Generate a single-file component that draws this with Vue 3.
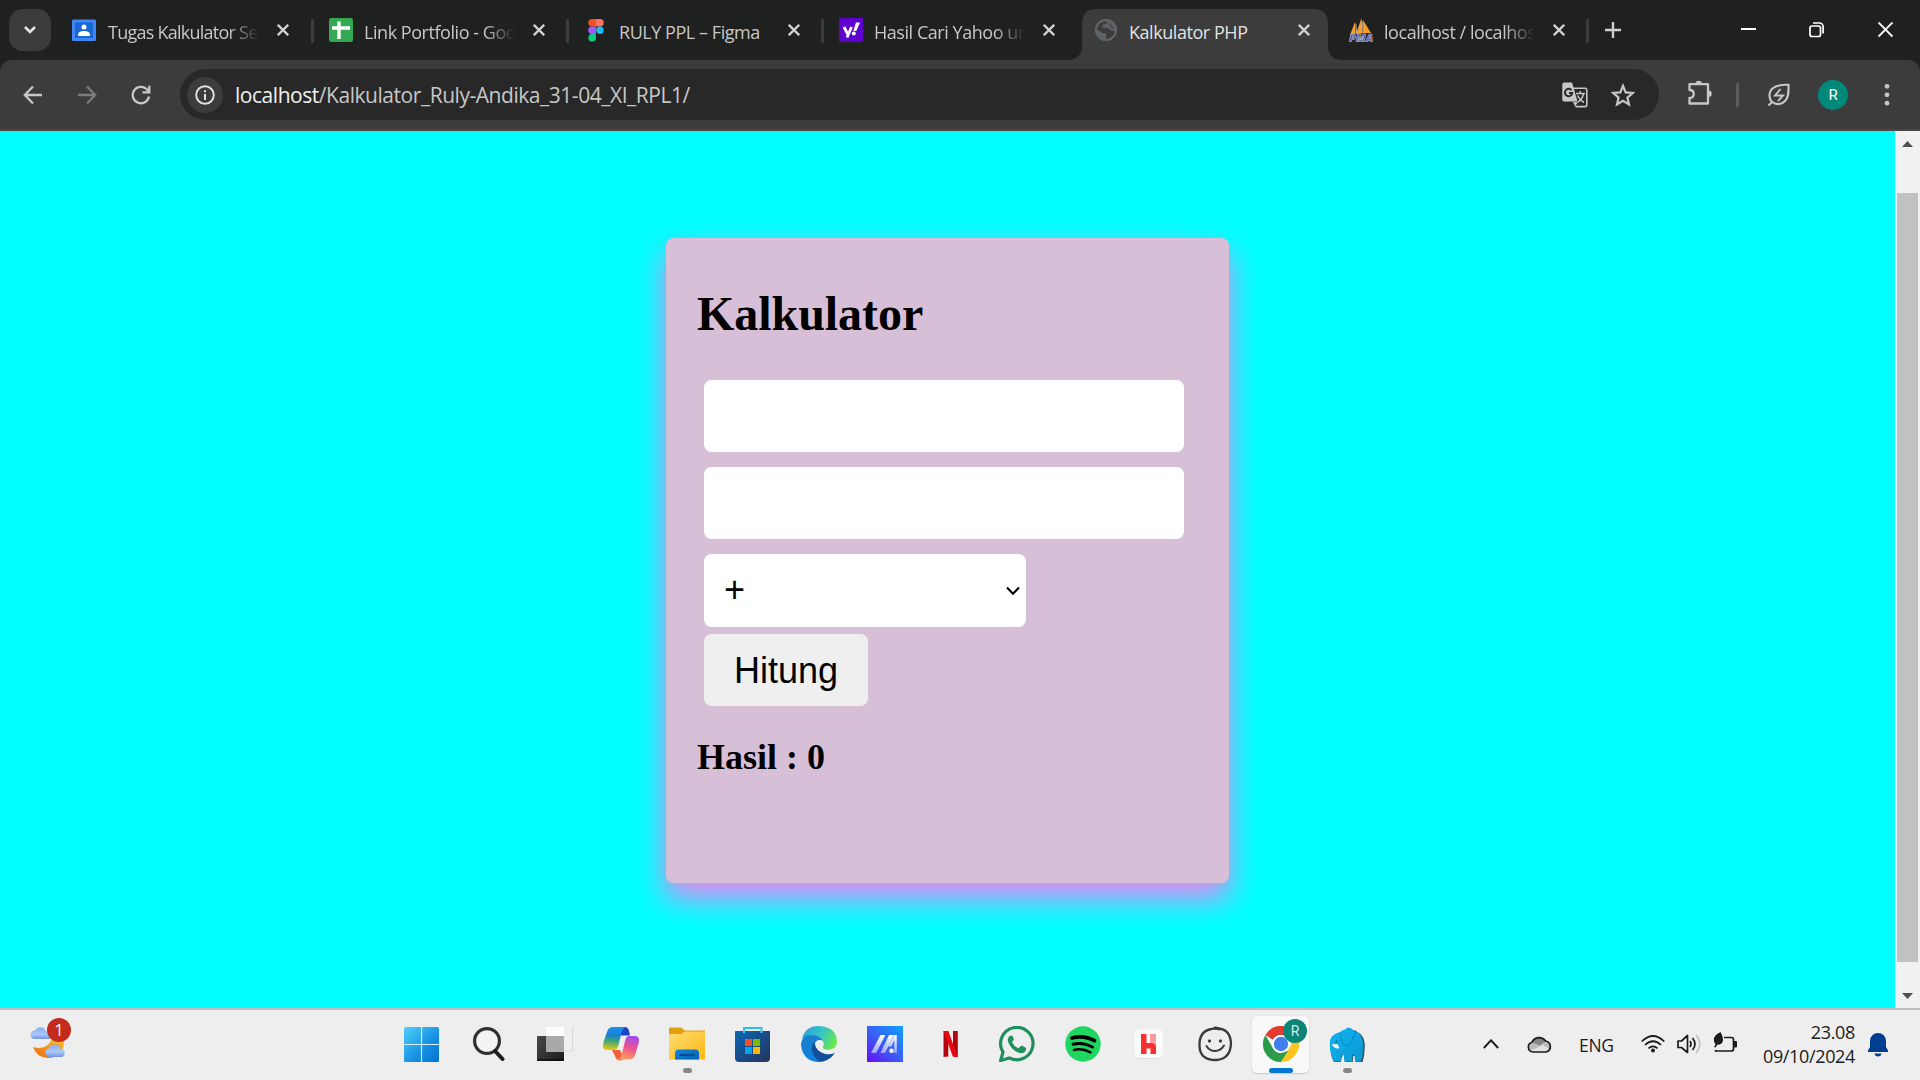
<script setup>
const tabs = [
  { icon: 'classroom', title: 'Tugas Kalkulator Se', fade: true },
  { icon: 'sheets', title: 'Link Portfolio - Goo', fade: true },
  { icon: 'figma', title: 'RULY PPL – Figma' },
  { icon: 'yahoo', title: 'Hasil Cari Yahoo un', fade: true },
  { icon: 'globe', title: 'Kalkulator PHP', active: true },
  { icon: 'pma', title: 'localhost / localhos', fade: true }
]
</script>

<template>
  <div class="screen">
    <header class="tabstrip">
      <div class="tab-search">
        <svg width="14" height="10" viewBox="0 0 14 10"><path d="M2 2l5 5 5-5" fill="none" stroke="#e6e6e6" stroke-width="2.6" /></svg>
      </div>
      <div v-for="t in tabs" :key="t.icon" class="tab" :class="[t.icon, { active: t.active }]">
        <svg v-if="t.active" class="shape" width="276" height="51" viewBox="0 0 276 51">
          <path d="M0 51Q15 51 15 36V15Q15 0 30 0H246Q261 0 261 15V36Q261 51 276 51Z" fill="#3c3c3c" />
        </svg>
        <svg class="fav" width="24" height="24" viewBox="0 0 24 24">
          <g v-if="t.icon === 'classroom'">
            <rect y="1.500" width="24" height="21.500" rx="1.500" fill="#4285f4" />
            <rect x="3" y="4.500" width="18" height="15.500" fill="#1967d2" />
            <circle cx="12" cy="9" r="2.500" fill="#fff" />
            <path d="M6 18v-1.500q0-3.500 6-3.500t6 3.500V18Z" fill="#fff" />
          </g>
          <g v-else-if="t.icon === 'sheets'">
            <rect width="24" height="24" rx="2.500" fill="#34a853" />
            <path d="M10 3.500V21M3 10h18" stroke="#fff" stroke-width="3.400" />
          </g>
          <g v-else-if="t.icon === 'figma'">
            <path d="M12 1H8a3.700 3.700 0 0 0 0 7.500h4Z" fill="#f24e1e" />
            <path d="M12 1h4a3.700 3.700 0 0 1 0 7.500h-4Z" fill="#ff7262" />
            <path d="M12 8.500H8a3.700 3.700 0 0 0 0 7.500h4Z" fill="#a259ff" />
            <circle cx="16" cy="12.300" r="3.700" fill="#1abcfe" />
            <path d="M12 16H8a3.800 3.800 0 1 0 4 3.800Z" fill="#0acf83" />
          </g>
          <g v-else-if="t.icon === 'yahoo'">
            <rect width="24" height="24" fill="#5f01d1" />
            <path d="M5 9l3.700 7M12.500 9L8 19.500" stroke="#fff" stroke-width="2.800" fill="none" />
            <path d="M17 4.500h4l-3.700 8.500h-3Z" fill="#fff" /><circle cx="14.800" cy="15.400" r="2" fill="#fff" />
          </g>
          <g v-else-if="t.icon === 'globe'">
            <circle cx="12" cy="12" r="11" fill="#5f6368" />
            <path d="M3 9l1.500-3.500L9 3l4 .3-1 2.700-3 .7-.5 3 5.500.3 2.500 2.500 4.500.5-1 4.500-4.500 4h-4l1-3.500-1-2.500-4-.7L3 11.500Z" fill="#3c3c3c" />
            <path d="M14 4l5 3.500 1.500 4-3-.5-2.500-3Z" fill="#3c3c3c" opacity="0.400" />
            <circle cx="12" cy="12" r="10" fill="none" stroke="#5f6368" stroke-width="2" />
          </g>
          <g v-else>
            <path d="M1 17L6 4l.8 11.500ZM7 16L12.500 0l1.200 15.500ZM14.500 15L14 2l8 13Z" fill="#f89c2a" />
            <path d="M6.800 5.500l1 10M13 3l1.500 12" stroke="#c9c9c9" stroke-width="0.800" />
            <text x="0" y="24" font-size="10" font-weight="900" font-style="italic" fill="#5557a8" stroke="#c8c8d8" stroke-width="0.500" textLength="24" lengthAdjust="spacingAndGlyphs">PMA</text>
          </g>
        </svg>
        <span class="title" :class="{ fade: t.fade }">{{ t.title }}</span>
        <svg class="x" width="12" height="12" viewBox="0 0 12 12"><path d="M.8.8l10.400 10.400M11.200.8L.8 11.200" /></svg>
      </div>
      <svg class="plus" width="16" height="16" viewBox="0 0 16 16"><path d="M8 0v16M0 8h16" stroke="#cfcfcf" stroke-width="2.400" /></svg>
      <div class="winbtns">
        <svg width="15" height="16" viewBox="0 0 15 16"><path d="M0 7h15" stroke="#fff" stroke-width="2" /></svg>
        <svg width="15" height="16" viewBox="0 0 15 16" fill="none" stroke="#fff" stroke-width="1.700"><rect x="1" y="4" width="10.500" height="10.500" rx="2" /><path d="M4 1h6.500a3.500 3.500 0 0 1 3.600 3.500V11.500" /></svg>
        <svg class="close" width="15" height="16" viewBox="0 0 15 16"><path d="M.5.5l14 14M14.500.5l-14 14" stroke="#fff" stroke-width="1.900" /></svg>
      </div>
    </header>

    <div class="toolbar-back">
      <nav class="toolbar">
        <svg class="back" width="20" height="20" viewBox="0 0 20 20"><path d="M19 10H2M10 1.500L1.800 10l8.200 8.500" /></svg>
        <svg class="fwd" width="20" height="20" viewBox="0 0 20 20"><path d="M1 10h17M10 1.500l8.200 8.500-8.200 8.500" /></svg>
        <svg class="reload" width="20" height="20" viewBox="0 0 20 20"><path d="M18 11.500A8.200 8.200 0 1 1 15.500 4L18 6.800M18.300.8V7.400H11.500" /></svg>
        <div class="omnibox">
          <span class="info">
            <svg width="20" height="20" viewBox="0 0 20 20"><circle cx="10" cy="10" r="8.800" fill="none" stroke="#e3e3e3" stroke-width="1.900" /><path d="M10 9v6M10 5.300v2" stroke="#e3e3e3" stroke-width="2" /></svg>
          </span>
          <span class="url"><b>localhost</b>/Kalkulator_Ruly-Andika_31-04_XI_RPL1/</span>
          <svg class="translate" width="26" height="26" viewBox="0 0 26 26">
            <path d="M11 6.200h12a1.800 1.800 0 0 1 1.800 1.800v14.800a1.800 1.800 0 0 1-1.800 1.800H13.500" fill="none" stroke="#c7c7c7" stroke-width="1.600" />
            <path d="M2 .5h8l5.500 19H2A1.800 1.800 0 0 1 .3 17.700V2.300A1.800 1.800 0 0 1 2 .5ZM11 20h5l-2.800 4.500Z" fill="#c7c7c7" />
            <path d="M9.600 8.300A3.700 3.700 0 1 0 10.300 11H7" fill="none" stroke="#282828" stroke-width="1.900" />
            <path d="M14 11.500h9M18.300 9v2.500M21.500 12c-1 4-3 6.500-5.500 8M15.500 13.500q2 4.500 6.500 7" fill="none" stroke="#c7c7c7" stroke-width="1.500" />
          </svg>
          <svg class="star" width="24" height="24" viewBox="0 0 24 24"><path d="M12 2.800l2.700 6.600 7 .6-5.300 4.600 1.600 6.900-6-3.700-6 3.700 1.600-6.900L2.300 10l7-.6Z" fill="none" stroke="#c7c7c7" stroke-width="2.200" /></svg>
        </div>
        <svg class="puzzle" width="25" height="26" viewBox="0 0 25 26">
          <path d="M1.500 4.200h18.500v19.300h-18.500v-5.500q4.200 0 4.200-4t-4.200-4Z" fill="none" stroke="#c7c7c7" stroke-width="2.300" stroke-linejoin="round" />
          <path d="M7.500 4a3.200 3.200 0 0 1 6.400 0ZM20.500 10.500a3.200 3.200 0 0 1 0 6.400Z" fill="#c7c7c7" />
        </svg>
        <i class="bar"></i>
        <svg class="leaf" width="24" height="24" viewBox="0 0 24 24" fill="none" stroke="#c7c7c7" stroke-width="2.100">
          <path d="M1.500 22.500L4.500 19.500M5.500 19.500C1 15 2 8.500 5.500 5.500S14 1.500 21.500 1.800C21.700 10 21.500 14 18.500 17.500S10 23 4.800 18.800" />
          <path d="M13.500 6L8 12.500h8L11 18" stroke-width="1.900" />
        </svg>
        <span class="avatar">R</span>
        <svg class="dots" width="6" height="24" viewBox="0 0 6 24" fill="#c7c7c7"><circle cx="3" cy="3.300" r="2.400" /><circle cx="3" cy="11.800" r="2.400" /><circle cx="3" cy="20.200" r="2.400" /></svg>
      </nav>
    </div>

    <main class="viewport">
      <section class="page">
        <div class="card">
          <h1>Kalkulator</h1>
          <input class="field" type="text" />
          <input class="field" type="text" />
          <div class="select">
            <span>+</span>
            <svg width="14" height="10" viewBox="0 0 14 10"><path d="M1 1.500l6 6.300 6-6.300" fill="none" stroke="#000" stroke-width="2.100" /></svg>
          </div>
          <button class="btn">Hitung</button>
          <h2>Hasil : 0</h2>
        </div>
      </section>
      <aside class="scroll">
        <svg width="11" height="6" viewBox="0 0 11 6"><path d="M5.500 0L11 6H0Z" fill="#505050" /></svg>
        <i class="thumb"></i>
        <svg width="11" height="6" viewBox="0 0 11 6"><path d="M5.500 6L11 0H0Z" fill="#505050" /></svg>
      </aside>
    </main>

    <footer class="taskbar">
      <div class="weather">
        <svg width="38" height="36" viewBox="0 0 38 36">
          <defs>
            <linearGradient id="moon" x1="1" y1="0" x2="0.300" y2="1"><stop offset="0" stop-color="#f5c336" /><stop offset="1" stop-color="#ee7414" /></linearGradient>
            <linearGradient id="cl" x1="0" y1="0" x2="0" y2="1"><stop offset="0" stop-color="#87aef2" /><stop offset="0.600" stop-color="#a9c8fa" /><stop offset="1" stop-color="#7196e0" /></linearGradient>
          </defs>
          <path d="M3 23Q18 27 22 14L34 14Q35 34 18 34Q6 33 3 23Z" fill="url(#moon)" />
          <path d="M4 15a4.300 4.300 0 0 1 1-8.500 6 6 0 0 1 11 .5Q20 8 20 15Z" fill="url(#cl)" />
          <path d="M19 33a4.300 4.300 0 0 1 0-8.500 6 6 0 0 1 11.500 .5 4 4 0 0 1 .5 8Z" fill="url(#cl)" />
        </svg>
        <span class="badge">1</span>
      </div>

      <div class="apps">
        <div class="app">
          <svg width="36" height="36" viewBox="0 0 36 36">
            <defs><linearGradient id="win" x1="0" y1="0" x2="1" y2="1"><stop offset="0" stop-color="#4fd0fb" /><stop offset="0.600" stop-color="#1590e2" /><stop offset="1" stop-color="#0273d0" /></linearGradient></defs>
            <rect x="1" y="1" width="35" height="35" rx="1.500" fill="url(#win)" /><path d="M18.500 1v35M1 18.500h35" stroke="#d9effb" stroke-width="1.200" />
          </svg>
        </div>
        <div class="app">
          <svg width="36" height="36" viewBox="0 0 36 36"><circle cx="18" cy="15" r="12.400" fill="#f3f3f3" stroke="#2f2f2f" stroke-width="3.200" /><path d="M26 25l7.500 8" stroke="#1d1d1d" stroke-width="4" stroke-linecap="round" /></svg>
        </div>
        <div class="app">
          <svg width="36" height="36" viewBox="0 0 36 36">
            <defs><linearGradient id="tvd" x1="0" y1="0" x2="1" y2="1"><stop offset="0" stop-color="#4a4a4a" /><stop offset="1" stop-color="#1c1c1c" /></linearGradient></defs>
            <rect y="10" width="27" height="25" rx="1" fill="url(#tvd)" /><path d="M0 34h27" stroke="#000" />
            <rect x="9" y="1" width="27" height="24.500" rx="1" fill="#fdfdfd" /><path d="M27 1h9v24.500h-9Z" fill="#efefef" /><path d="M9 25h27M35.500 1v24" stroke="#d0d0d0" stroke-width="0.800" />
            <rect x="9" y="10" width="18" height="15.500" fill="#a9a9a9" />
          </svg>
        </div>
        <div class="app">
          <svg width="36" height="36" viewBox="0 0 36 36">
            <defs>
              <linearGradient id="cpa" x1="0.300" y1="0" x2="0.200" y2="1"><stop offset="0" stop-color="#1693ee" /><stop offset="0.350" stop-color="#1b7fd4" /><stop offset="0.600" stop-color="#3da872" /><stop offset="1" stop-color="#f2cb0c" /></linearGradient>
              <linearGradient id="cpb" x1="0.600" y1="0" x2="0.300" y2="1"><stop offset="0" stop-color="#a44bea" /><stop offset="0.500" stop-color="#ee558c" /><stop offset="1" stop-color="#ffa45e" /></linearGradient>
            </defs>
            <path d="M9 24h8l4 9q-2 2-5 1.300-3-.3-4-4.300Z" fill="#f4603a" />
            <path d="M17 1h5q3 0 4 4l1 4.500h-9Z" fill="#1844c8" />
            <path d="M10 1h13q-3 .5-4.500 6l-3 12q-1 5-5 5H4Q-1.500 24 .5 16L4 6Q5.500 1 10 1Z" fill="url(#cpa)" />
            <path d="M26 10h6q5.500 0 3.500 8L32 29q-1.500 4.500-6 4.500H14q3.500-.5 5-6l3-12.500q1-5 4-5Z" fill="url(#cpb)" />
          </svg>
        </div>
        <div class="app">
          <svg width="36" height="36" viewBox="0 0 36 36">
            <defs><linearGradient id="fold" x1="0" y1="0" x2="1" y2="1"><stop offset="0" stop-color="#ffdc72" /><stop offset="1" stop-color="#fcb913" /></linearGradient><linearGradient id="foldb" x1="0" y1="0" x2="1" y2="1"><stop offset="0" stop-color="#1186dc" /><stop offset="1" stop-color="#0460b5" /></linearGradient></defs>
            <path d="M0 3q0-1.500 1.500-1.500h10.500L16 4.500H36V10H0Z" fill="#dfa008" /><path d="M0 9q0-1 1-1h11l4-2.500H36V33.500H0Z" fill="url(#fold)" />
            <path d="M6 33.500V27q0-3.500 3.500-3.500h17Q30 23.500 30 27v6.500Z" fill="url(#foldb)" /><path d="M11 29h14" stroke="#07498b" stroke-width="1.800" stroke-linecap="round" />
          </svg>
          <i class="dot"></i>
        </div>
        <div class="app">
          <svg width="36" height="36" viewBox="0 0 36 36">
            <defs><linearGradient id="store" x1="0" y1="0" x2="1" y2="1"><stop offset="0" stop-color="#0a67b6" /><stop offset="1" stop-color="#26325a" /></linearGradient></defs>
            <path d="M9 7V2h17.500v5" fill="none" stroke="#2cbdf0" stroke-width="2" /><path d="M0 5.500q0-.5.500-.5h34q.5 0 .5.500V32q0 4-4 4H4q-4 0-4-4Z" fill="url(#store)" />
            <path d="M9 5v2M26.500 5v2" stroke="#3fd3fa" stroke-width="2" />
            <rect x="10" y="13" width="7" height="7" fill="#f25022" /><rect x="18" y="13" width="7" height="7" fill="#7fba00" /><rect x="10" y="21" width="7" height="7" fill="#00a4ef" /><rect x="18" y="21" width="7" height="7" fill="#ffb900" />
          </svg>
        </div>
        <div class="app">
          <svg width="36" height="36" viewBox="0 0 36 36">
            <defs><linearGradient id="edg" x1="0" y1="0.200" x2="1" y2="0.600"><stop offset="0" stop-color="#2a9fe0" /><stop offset="0.500" stop-color="#35c5c5" /><stop offset="1" stop-color="#6de84c" /></linearGradient><linearGradient id="edb" x1="0" y1="0" x2="0.400" y2="1"><stop offset="0" stop-color="#1d7fc9" /><stop offset="1" stop-color="#0f7fe0" /></linearGradient></defs>
            <path d="M1 13Q4 0 18 0 36 1 36 16q-1 8-9 8-6 0-5.500-3 2-2 1-4Q18 5 1 13Z" fill="url(#edg)" />
            <path d="M0 18Q1 9 10 9q9 0 12 6-5-3-8 2-2 8 4 13 4 4 4 5.500-4 .5-6 .5Q1 34 0 18Z" fill="url(#edb)" />
            <path d="M14 15Q8 22 13 30q4 6 9 5.500 8-2 12-9-5 3-11 1-8-3-9-9-1-2 0-3.500Z" fill="#114f99" />
            <path d="M14.500 17.500q1-4 5-3.500 4 1 2.500 5.500-1.500 4 4.500 4.500 4 0 7-2v5q-5 2-10 .5-8-2.500-9-10Z" fill="#eeeeee" />
          </svg>
        </div>
        <div class="app">
          <svg width="36" height="36" viewBox="0 0 36 36">
            <defs><linearGradient id="asus" x1="1" y1="0" x2="0.100" y2="1"><stop offset="0" stop-color="#0ea2ff" /><stop offset="0.550" stop-color="#3a5ef5" /><stop offset="1" stop-color="#6412f8" /></linearGradient><linearGradient id="asl" x1="0" y1="0" x2="0" y2="1"><stop offset="0" stop-color="#fff" /><stop offset="1" stop-color="#9ba5fb" /></linearGradient></defs>
            <rect width="36" height="36" fill="url(#asus)" /><path d="M13.500 9h5L9 27H4ZM22 9h5l-9 18H13.500ZM27.500 9h2.300v18h-2.500V14l-3 6.500h-3Z" fill="url(#asl)" /><circle cx="24.500" cy="24.700" r="2.200" fill="#fff" />
          </svg>
        </div>
        <div class="app">
          <svg width="36" height="36" viewBox="0 0 36 36"><path d="M10.500 5h4.800v25.500L10.500 31ZM20 5h4.800v26l-4.800-.5Z" fill="#b1060f" /><path d="M10.500 5h4.800L24.800 31l-5-.6Z" fill="#e50914" /></svg>
        </div>
        <div class="app">
          <svg width="36" height="36" viewBox="0 0 36 36"><path d="M1.700 34.500L4 26A16.200 16.200 0 1 1 10.500 32Z" fill="none" stroke="#1f8f5b" stroke-width="3.200" /><path d="M12 9.500q-4 1.500-3 6 3 9 12 11.500 5 .8 6-3.500.5-1.500-1-2.200l-3-1.500q-1-.3-2 1l-1.300 1.500q-5-2-6.700-6l1.500-2q.5-.6.2-1.500l-1.200-2.800q-.5-.8-1.500-.5Z" fill="#1f8f5b" /></svg>
        </div>
        <div class="app">
          <svg width="36" height="36" viewBox="0 0 36 36"><circle cx="18" cy="18" r="17.700" fill="#1ed760" /><g fill="none" stroke="#000" stroke-linecap="round"><path d="M7 12q12-3 22.500 2.700" stroke-width="3.700" /><path d="M8 18.200q10-2.500 19.500 2.800" stroke-width="3" /><path d="M9 24q8.500-2 16.500 2.300" stroke-width="2.500" /></g></svg>
        </div>
        <div class="app">
          <svg width="36" height="36" viewBox="0 0 36 36"><rect x="3.500" y="4" width="28.500" height="29" rx="4.500" fill="#dedede" /><rect x="3.500" y="3.500" width="28.500" height="28.500" rx="4.500" fill="#fafafa" /><path d="M19 8h6v11h-6Z" fill="#ff9a9a" /><path d="M10 8h5.500v9h4q5.500 0 5.500 4v7h-5.500v-5.500h-4V28h-5.500Z" fill="#f8302f" /></svg>
        </div>
        <div class="app">
          <svg width="36" height="36" viewBox="0 0 36 36" fill="none" stroke="#3a3a3a"><path d="M19 2.500q14-.5 15 14.500-.5 16-14.500 17Q3 34.500 2.500 20 2 5 14.500 3q4-1 7 0" stroke-width="2.300" /><path d="M9.500 20q3 5 8.500 5t9-5.500" stroke-width="2" stroke-linecap="round" /><path d="M17 2q4-1 6 2" stroke-width="2.500" /><circle cx="12.500" cy="15" r="1.200" fill="#3a3a3a" stroke-width="1" /><circle cx="23.500" cy="15" r="1.200" fill="#3a3a3a" stroke-width="1" /></svg>
        </div>
        <div class="app current">
          <svg width="36" height="36" viewBox="0 0 36 36">
            <path d="M2.400 9A18 18 0 0 1 33.600 9H18a9 9 0 0 0-8 4.800Z" fill="#e33b2e" /><path d="M2.400 9L10.200 22.500A9 9 0 0 0 18 27h0l-3 8.900A18 18 0 0 1 2.400 9Z" fill="#2a9c48" /><path d="M33.600 9A18 18 0 0 1 17.500 36L25.800 22.500A9 9 0 0 0 25 9Z" fill="#fcc521" /><path d="M14.800 35.700L18 26l7 -1L17.800 36Z" fill="#2a9c48" />
            <circle cx="18" cy="18" r="9" fill="#fff" /><circle cx="18" cy="18" r="7.200" fill="#3f7eec" />
          </svg>
          <span class="mini">R</span>
          <i class="dot wide"></i>
        </div>
        <div class="app">
          <svg width="36" height="36" viewBox="0 0 36 36">
            <defs><linearGradient id="ele" x1="0" y1="0" x2="1" y2="1"><stop offset="0" stop-color="#10b4f2" /><stop offset="1" stop-color="#0b98d4" /></linearGradient></defs>
            <path d="M11 6q3-2.500 5-2.500 3-4 7 0 12 3 12 16 0 8-2 16h-7l-.5-6h-2l-.5 6h-8l-1-8q-2 2-3 8H4Q0 28 1 14 3 8 11 6Z" fill="#355866" transform="translate(.8 .5)" />
            <path d="M11 6q3-2.500 5-2.500 3-4 7 0 11 3 11 16 0 8-2 16h-6l-.5-7h-2l-.5 7h-7.500l-1-8q-2 2-3 8H5Q0 28 1 14 3 8 11 6Z" fill="url(#ele)" />
            <path d="M12 7q-1 10 5 13 6 0 7-9M24 12q4-4 2-8" fill="none" stroke="#0786bd" stroke-width="0.900" /><path d="M4 19q2 3.500 6 2.500-2-.5-2-2.500Z" fill="#fff" stroke="#fff" stroke-width="1.500" /><circle cx="7.500" cy="15.500" r="0.900" fill="#1a4d66" />
          </svg>
          <i class="dot"></i>
        </div>
      </div>

      <div class="tray">
        <svg class="up" width="16" height="10" viewBox="0 0 16 10"><path d="M.8 9L8 1.300 15.200 9" fill="none" stroke="#1b1b1b" stroke-width="1.900" /></svg>
        <svg class="cloud" width="25" height="17" viewBox="0 0 25 17"><path d="M6 16A5 5 0 0 1 5 6.200 7.800 7.800 0 0 1 18.500 5 5.600 5.600 0 0 1 19 16Z" fill="#bcbcbc" /><path d="M5 6.200A7.800 7.800 0 0 1 18.500 5L13 9.500Z" fill="#858585" /><path d="M4 14.500L16 9l6 4-3 3H6Z" fill="#e2e2e2" /><path d="M6 16A5 5 0 0 1 5 6.200 7.800 7.800 0 0 1 18.500 5 5.600 5.600 0 0 1 19 16Z" fill="none" stroke="#1b1b1b" stroke-width="1.700" /></svg>
        <span class="lang">ENG</span>
        <svg class="wifi" width="24" height="18" viewBox="0 0 24 18" fill="none" stroke="#1b1b1b" stroke-width="1.700"><path d="M.7 6.500q11.300-11 22.600 0M4 10q8-7.500 16 0M7.500 13.300q4.500-4 9 0" /><circle cx="12" cy="15.500" r="2" fill="#1b1b1b" stroke="none" /></svg>
        <svg class="vol" width="24" height="20" viewBox="0 0 24 20" fill="none" stroke="#1b1b1b" stroke-width="1.700"><path d="M1 7h3.500L10.500 1.500v17L4.500 13.500H1Z" stroke-linejoin="round" /><path d="M13 7q2.200 3 0 6M15.500 4q5 6 0 12" /><path d="M19 1q7.500 9 0 18" stroke="#c2c2c2" /></svg>
        <svg class="bat" width="25" height="21" viewBox="0 0 25 21"><path d="M11 5.500h7.500q2 0 2 2v9.500q0 2-2 2H4q-1.500 0-2.200-.7" fill="none" stroke="#1b1b1b" stroke-width="1.700" /><path d="M21 9h2q1 0 1 1v4.500q0 1-1 1h-2Z" fill="#1b1b1b" /><path d="M7.500 0q4.500 8 1 11.500-1.500 1.500-4 1L2.500 15.500 1 15l1.500-2.500Q-2.500 5 7.500 0Z" fill="#1b1b1b" /></svg>
        <div class="clock"><span>23.08</span><span>09/10/2024</span></div>
        <svg class="bell" width="20" height="24" viewBox="0 0 20 24" fill="#003e92"><path d="M2 8a8 8 0 0 1 16 0v6l2 3.500V19H0v-1.500L2 14ZM6.500 20.500h7Q13 23.500 10 23.500T6.500 20.500Z" /></svg>
      </div>
    </footer>
  </div>
</template>

<style>
body { margin: 0; overflow: hidden; }
</style>

<style scoped>
* { box-sizing: border-box; }
svg { display: block; flex: none; }
.screen { width: 1920px; height: 1080px; display: flex; flex-direction: column; font-family: "Open Sans", "Noto Sans", sans-serif; overflow: hidden; }

.tabstrip { height: 60px; background: #1f2120; display: flex; }
.tab-search { width: 42px; height: 42px; margin: 9px 6px 0 9px; border-radius: 14px; background: #3c3c3c; display: flex; align-items: center; justify-content: center; }
.tab { position: relative; width: 255px; height: 60px; display: flex; align-items: center; padding-left: 17px; flex: none; }
.tab::after { content: ""; position: absolute; right: -2px; top: 19px; width: 3px; height: 24px; border-radius: 1px; background: #3c3c3c; }
.tab.classroom { padding-left: 15px; }
.tab.classroom .title { margin-left: 12px; letter-spacing: -0.75px; }
.tab.yahoo::after, .tab.active::after { display: none; }
.shape { position: absolute; left: -10px; top: 9px; }
.fav { position: relative; }
.title { position: relative; margin: 3px 0 0 11px; width: 151px; white-space: nowrap; font-size: 18px; line-height: 26px; color: #c7c7c7; letter-spacing: -0.450px; }
.active .title { color: #e3e3e3; }
.title.fade { -webkit-mask-image: linear-gradient(90deg, #000 80%, transparent); mask-image: linear-gradient(90deg, #000 80%, transparent); }
.x { position: relative; margin-left: 18px; fill: none; stroke: #d0d0d0; stroke-width: 2.300; }
.plus { margin: 22px 0 0 18px; }
.winbtns { display: flex; gap: 53px; margin: 22px 0 0 120px; }
.close { margin-left: 1px; }

.toolbar-back { background: #1f2120; }
.toolbar { height: 71px; background: #3c3c3c; border-bottom: 2px solid #474747; border-radius: 12px 12px 0 0; display: flex; align-items: center; }
.back, .fwd, .reload { fill: none; stroke: #c7c7c7; stroke-width: 2.300; }
.back { margin-left: 23px; }
.fwd { margin-left: 34px; stroke: #7c7c7c; }
.reload { margin-left: 34px; }
.omnibox { margin-left: 29px; width: 1479px; height: 51px; border-radius: 26px; background: #282828; display: flex; align-items: center; }
.info { width: 36px; height: 36px; margin-left: 7px; border-radius: 50%; background: #3c3c3c; display: flex; align-items: center; justify-content: center; }
.url { margin-left: 12px; width: 1327px; font-size: 21px; line-height: 30px; color: #c7c7c7; white-space: nowrap; letter-spacing: -0.460px; }
.url b { font-weight: 400; color: #f0f0f0; }
.translate { flex: none; }
.star { margin-left: 23px; }
.puzzle { margin-left: 29px; margin-top: -3px; }
.bar { width: 3px; height: 24px; margin-left: 23px; border-radius: 1px; background: #5c5c5c; }
.leaf { margin-left: 28px; }
.avatar { width: 30px; height: 30px; margin-left: 27px; border-radius: 50%; background: #00897b; color: #fff; font: 15px/30px Roboto, sans-serif; text-align: center; }
.dots { margin-left: 36px; }

.viewport { height: 877px; display: flex; }
.page { width: 1895px; background: #00ffff; padding: 107px 0 0 666px; }
.card { width: 563px; height: 645px; padding: 48px 30px 0 31px; border-radius: 7.500px; background: #d8bfd8; box-shadow: 0 15px 30px violet; display: flex; flex-direction: column; align-items: flex-start; font-family: "Liberation Serif", serif; color: #000; }
h1 { margin: 0 0 38px; font-size: 48px; line-height: 56px; letter-spacing: -0.050px; }
.field { width: 480px; height: 72px; margin: 0 0 15px 7px; padding: 0 20px; border: 0; border-radius: 7.500px; background: #fff; }
.select { width: 322px; height: 73px; margin: 0 0 7px 7px; padding: 0 6px 0 20px; border-radius: 7.500px; background: #fff; display: flex; align-items: center; justify-content: space-between; font: 36px/73px "Liberation Sans", sans-serif; }
.select span { margin-top: -2px; }
.btn { width: 164px; height: 72px; margin-left: 7px; padding: 1px 0 0; border: 0; border-radius: 7.500px; background: #efefef; color: #000; font: 36px/71px "Liberation Sans", sans-serif; }
h2 { margin: 31px 0 0; font-size: 36px; line-height: 40px; }
.scroll { width: 25px; background: #f1f1f1; display: flex; flex-direction: column; align-items: center; padding-top: 10px; }
.thumb { width: 21px; height: 769px; margin: 46px 0 31px; background: #c1c1c1; }

.taskbar { height: 72px; background: #eeeeee; border-top: 2px solid #c0c0c0; display: flex; color: #1b1b1b; }
.weather { position: relative; width: 388px; padding: 14px 0 0 30px; }
.badge { position: absolute; left: 47px; top: 8px; width: 24px; height: 24px; border-radius: 50%; background: #c42b1c; color: #fff; font-size: 16px; line-height: 24px; text-align: center; }
.apps { display: flex; }
.app { position: relative; width: 66px; padding: 16px 0 0 15px; }
.app:nth-child(n+3) { padding-left: 17px; }
.app > svg { position: relative; }
.dot { position: absolute; left: 31px; top: 58px; width: 9px; height: 5px; border-radius: 3px; background: #868686; }
.dot.wide { left: 23px; width: 24px; background: #0078d4; }
.current::before { content: ""; position: absolute; left: 6px; top: 6px; width: 57px; height: 57px; border-radius: 5px; background: #f9f9f9; box-shadow: 0 1px 1px #c9c9c9, 0 0 0 1px #e6e6e6; }
.mini { position: absolute; left: 37px; top: 9px; width: 24px; height: 24px; border-radius: 50%; background: #0a8578; color: #d6ece9; font: 14px/24px Roboto, sans-serif; text-align: center; }
.tray { display: flex; align-items: flex-start; margin-left: 105px; }
.up { margin-top: 29px; }
.cloud { margin: 26px 0 0 28px; }
.lang { margin: 22px 0 0 27px; width: 36px; font-size: 17.500px; line-height: 26px; letter-spacing: -0.300px; }
.wifi { margin: 25px 0 0 26px; }
.vol { margin: 24px 0 0 12px; }
.bat { margin: 22px 0 0 12px; }
.clock { width: 105px; margin: 10px 0 0 12px; display: flex; flex-direction: column; align-items: flex-end; font-size: 18px; line-height: 24px; letter-spacing: -0.350px; }
.bell { margin: 23px 0 0 13px; }
</style>
